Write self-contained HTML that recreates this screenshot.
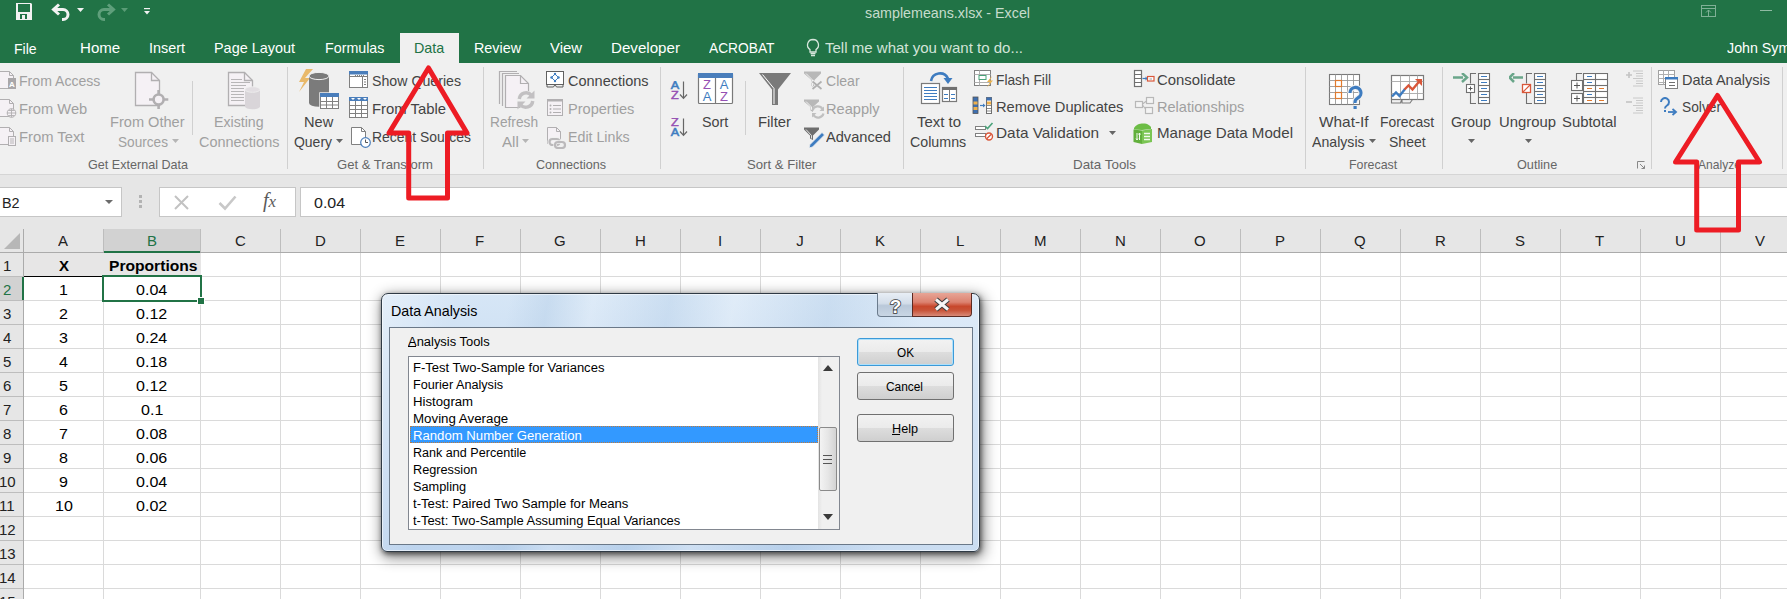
<!DOCTYPE html><html><head><meta charset="utf-8"><style>
html,body{margin:0;padding:0;width:1787px;height:599px;overflow:hidden;background:#fff}
.t{position:absolute;white-space:nowrap;line-height:1;font-family:"Liberation Sans",sans-serif;transform-origin:0 0}
.r{position:absolute}
</style></head><body>
<div class="r" style="left:0px;top:0px;width:1787px;height:63px;background:#217346"></div>
<div class="t" style="left:865px;top:5px;font-size:15px;color:#c6dccd;transform:scaleX(0.9516);">samplemeans.xlsx - Excel</div>
<svg class="r" style="left:14px;top:2px;" width="20" height="19" viewBox="0 0 20 19"><path d="M2 1h15l1 1v16H2z" fill="#f2f2f2"/><rect x="4" y="2" width="12" height="8" fill="#217346"/><rect x="6" y="12" width="7" height="5" fill="#217346"/><rect x="8" y="13" width="3" height="4" fill="#f2f2f2"/></svg>
<svg class="r" style="left:50px;top:2px;" width="24" height="19" viewBox="0 0 24 19"><path d="M5 7.5h8a5 5 0 0 1 0 10h-1" fill="none" stroke="#f2f2f2" stroke-width="3"/><path d="M9 2.5L3.5 7.5 9 12.5" fill="none" stroke="#f2f2f2" stroke-width="3"/></svg>
<svg class="r" style="left:77px;top:8px;" width="8" height="5" viewBox="0 0 8 5"><path d="M0 0h7L3.5 4z" fill="#f2f2f2"/></svg>
<svg class="r" style="left:94px;top:2px;" width="24" height="19" viewBox="0 0 24 19"><path d="M18 7.5h-8a5 5 0 0 0 0 10h1" fill="none" stroke="#5f9f7b" stroke-width="3"/><path d="M14 2.5l5.5 5-5.5 5" fill="none" stroke="#5f9f7b" stroke-width="3"/></svg>
<svg class="r" style="left:121px;top:8px;" width="8" height="5" viewBox="0 0 8 5"><path d="M0 0h7L3.5 4z" fill="#5a9c76"/></svg>
<svg class="r" style="left:144px;top:8px;" width="7" height="8" viewBox="0 0 7 8"><rect x="0" y="0" width="6" height="1.2" fill="#f2f2f2"/><path d="M0 3h6L3 6.5z" fill="#f2f2f2"/></svg>
<svg class="r" style="left:1700px;top:4px;" width="18" height="14" viewBox="0 0 18 14"><rect x="1.5" y="1.5" width="14" height="11" fill="none" stroke="#7fb096" stroke-width="1"/><path d="M1.5 4.5h14M8.5 12.5V6M6 8.5l2.5-2.5 2.5 2.5" fill="none" stroke="#7fb096" stroke-width="1"/></svg>
<div class="r" style="left:1760px;top:10px;width:12px;height:1px;background:#8fbba3"></div>
<div class="t" style="left:14.3px;top:41px;font-size:15px;color:#ffffff;transform:scaleX(0.9391);">File</div>
<div class="t" style="left:79.5px;top:40px;font-size:15px;color:#ffffff;transform:scaleX(1.0047);">Home</div>
<div class="t" style="left:148.8px;top:40px;font-size:15px;color:#ffffff;transform:scaleX(0.9569);">Insert</div>
<div class="t" style="left:214px;top:40px;font-size:15px;color:#ffffff;transform:scaleX(0.9616);">Page Layout</div>
<div class="t" style="left:324.5px;top:40px;font-size:15px;color:#ffffff;transform:scaleX(0.9502);">Formulas</div>
<div class="t" style="left:474px;top:40px;font-size:15px;color:#ffffff;transform:scaleX(0.9556);">Review</div>
<div class="t" style="left:550px;top:40px;font-size:15px;color:#ffffff;transform:scaleX(0.9925);">View</div>
<div class="t" style="left:611px;top:40px;font-size:15px;color:#ffffff;transform:scaleX(1.0092);">Developer</div>
<div class="t" style="left:709px;top:40px;font-size:15px;color:#ffffff;transform:scaleX(0.9174);">ACROBAT</div>
<div class="r" style="left:400px;top:33px;width:59px;height:31px;background:#f0f0f0"></div>
<div class="t" style="left:413.75px;top:40px;font-size:15px;color:#217346;transform:scaleX(0.9547);">Data</div>
<svg class="r" style="left:805px;top:38px;" width="16" height="19" viewBox="0 0 16 19"><path d="M8 1.5a5.5 5.5 0 0 0-3 10.1V14h6v-2.4A5.5 5.5 0 0 0 8 1.5z" fill="none" stroke="#d6e6dc" stroke-width="1.3"/><path d="M5.5 15.5h5M6 17.5h4" stroke="#d6e6dc" stroke-width="1.3"/></svg>
<div class="t" style="left:825px;top:40px;font-size:15px;color:#d3e4d9;transform:scaleX(1.0020);">Tell me what you want to do...</div>
<div class="t" style="left:1727px;top:40px;font-size:15px;color:#ffffff;transform:scaleX(0.9500);">John Symons</div>
<div class="r" style="left:0px;top:63px;width:1787px;height:111px;background:#f0f0f0"></div>
<div class="r" style="left:0px;top:174px;width:1787px;height:1px;background:#d5d5d5"></div>
<div class="r" style="left:0px;top:175px;width:1787px;height:54px;background:#e6e6e6"></div>
<div class="r" style="left:287px;top:67px;width:1px;height:102px;background:#d0d0d0"></div>
<div class="r" style="left:483px;top:67px;width:1px;height:102px;background:#d0d0d0"></div>
<div class="r" style="left:660px;top:67px;width:1px;height:102px;background:#d0d0d0"></div>
<div class="r" style="left:903px;top:67px;width:1px;height:102px;background:#d0d0d0"></div>
<div class="r" style="left:1305px;top:67px;width:1px;height:102px;background:#d0d0d0"></div>
<div class="r" style="left:1442px;top:67px;width:1px;height:102px;background:#d0d0d0"></div>
<div class="r" style="left:1651px;top:67px;width:1px;height:102px;background:#d0d0d0"></div>
<div class="r" style="left:1782px;top:67px;width:1px;height:102px;background:#d0d0d0"></div>
<div class="r" style="left:192px;top:81px;width:1px;height:54px;background:#d0d0d0"></div>
<div class="r" style="left:745px;top:81px;width:1px;height:54px;background:#d0d0d0"></div>
<div class="t" style="left:88px;top:158px;font-size:13px;color:#666666;transform:scaleX(0.9678);">Get External Data</div>
<div class="t" style="left:337px;top:158px;font-size:13px;color:#666666;transform:scaleX(1.0067);">Get & Transform</div>
<div class="t" style="left:536.4px;top:158px;font-size:13px;color:#666666;transform:scaleX(0.9686);">Connections</div>
<div class="t" style="left:747px;top:158px;font-size:13px;color:#666666;transform:scaleX(1.0113);">Sort & Filter</div>
<div class="t" style="left:1073px;top:158px;font-size:13px;color:#666666;transform:scaleX(1.0296);">Data Tools</div>
<div class="t" style="left:1349.4px;top:158px;font-size:13px;color:#666666;transform:scaleX(0.9531);">Forecast</div>
<div class="t" style="left:1516.8px;top:158px;font-size:13px;color:#666666;transform:scaleX(0.9759);">Outline</div>
<div class="t" style="left:1698px;top:158px;font-size:13px;color:#666666;transform:scaleX(0.9297);">Analyze</div>
<div class="t" style="left:19.2px;top:73px;font-size:15px;color:#a0a0a0;transform:scaleX(0.9390);">From Access</div>
<div class="t" style="left:19.2px;top:101px;font-size:15px;color:#a0a0a0;transform:scaleX(0.9780);">From Web</div>
<div class="t" style="left:19.2px;top:129px;font-size:15px;color:#a0a0a0;transform:scaleX(0.9849);">From Text</div>
<div class="t" style="left:110.4px;top:114px;font-size:15px;color:#a0a0a0;transform:scaleX(0.9729);">From Other</div>
<div class="t" style="left:117.6px;top:134px;font-size:15px;color:#a0a0a0;transform:scaleX(0.9086);">Sources</div>
<div class="t" style="left:214.4px;top:114px;font-size:15px;color:#a0a0a0;transform:scaleX(0.9443);">Existing</div>
<div class="t" style="left:199px;top:134px;font-size:15px;color:#a0a0a0;transform:scaleX(0.9642);">Connections</div>
<div class="t" style="left:304.4px;top:114px;font-size:15px;color:#444444;transform:scaleX(0.9731);">New</div>
<div class="t" style="left:294.4px;top:134px;font-size:15px;color:#444444;transform:scaleX(0.9303);">Query</div>
<div class="t" style="left:372px;top:73px;font-size:15px;color:#444444;transform:scaleX(0.9447);">Show Queries</div>
<div class="t" style="left:372px;top:101px;font-size:15px;color:#444444;transform:scaleX(0.9899);">From Table</div>
<div class="t" style="left:372px;top:129px;font-size:15px;color:#444444;transform:scaleX(0.9276);">Recent Sources</div>
<div class="t" style="left:490.4px;top:114px;font-size:15px;color:#a0a0a0;transform:scaleX(0.9139);">Refresh</div>
<div class="t" style="left:501.6px;top:134px;font-size:15px;color:#a0a0a0;transform:scaleX(1.0077);">All</div>
<div class="t" style="left:568px;top:73px;font-size:15px;color:#444444;transform:scaleX(0.9666);">Connections</div>
<div class="t" style="left:568px;top:101px;font-size:15px;color:#a0a0a0;transform:scaleX(0.9712);">Properties</div>
<div class="t" style="left:568px;top:129px;font-size:15px;color:#a0a0a0;transform:scaleX(0.9472);">Edit Links</div>
<div class="t" style="left:702.4px;top:114px;font-size:15px;color:#444444;transform:scaleX(0.9523);">Sort</div>
<div class="t" style="left:758px;top:114px;font-size:15px;color:#444444;transform:scaleX(0.9900);">Filter</div>
<div class="t" style="left:826px;top:73px;font-size:15px;color:#a0a0a0;transform:scaleX(0.9373);">Clear</div>
<div class="t" style="left:826px;top:101px;font-size:15px;color:#a0a0a0;transform:scaleX(0.9739);">Reapply</div>
<div class="t" style="left:826px;top:129px;font-size:15px;color:#444444;transform:scaleX(0.9742);">Advanced</div>
<div class="t" style="left:917px;top:114px;font-size:15px;color:#444444;transform:scaleX(0.9958);">Text to</div>
<div class="t" style="left:910.4px;top:134px;font-size:15px;color:#444444;transform:scaleX(0.9495);">Columns</div>
<div class="t" style="left:996.4px;top:72px;font-size:15px;color:#444444;transform:scaleX(0.9165);">Flash Fill</div>
<div class="t" style="left:996px;top:99px;font-size:15px;color:#444444;transform:scaleX(0.9796);">Remove Duplicates</div>
<div class="t" style="left:996px;top:125px;font-size:15px;color:#444444;transform:scaleX(1.0236);">Data Validation</div>
<div class="t" style="left:1157px;top:72px;font-size:15px;color:#444444;transform:scaleX(0.9922);">Consolidate</div>
<div class="t" style="left:1157px;top:99px;font-size:15px;color:#a0a0a0;transform:scaleX(0.9705);">Relationships</div>
<div class="t" style="left:1157px;top:125px;font-size:15px;color:#444444;transform:scaleX(1.0068);">Manage Data Model</div>
<div class="t" style="left:1319.4px;top:114px;font-size:15px;color:#444444;transform:scaleX(1.0261);">What-If</div>
<div class="t" style="left:1312.4px;top:134px;font-size:15px;color:#444444;transform:scaleX(0.9417);">Analysis</div>
<div class="t" style="left:1380.4px;top:114px;font-size:15px;color:#444444;transform:scaleX(0.9254);">Forecast</div>
<div class="t" style="left:1389px;top:134px;font-size:15px;color:#444444;transform:scaleX(0.9337);">Sheet</div>
<div class="t" style="left:1451px;top:114px;font-size:15px;color:#444444;transform:scaleX(0.9594);">Group</div>
<div class="t" style="left:1499px;top:114px;font-size:15px;color:#444444;transform:scaleX(0.9906);">Ungroup</div>
<div class="t" style="left:1562.4px;top:114px;font-size:15px;color:#444444;transform:scaleX(0.9920);">Subtotal</div>
<div class="t" style="left:1682.4px;top:72px;font-size:15px;color:#444444;transform:scaleX(0.9683);">Data Analysis</div>
<div class="t" style="left:1682px;top:99px;font-size:15px;color:#444444;transform:scaleX(0.9172);">Solver</div>
<svg class="r" style="left:172.0px;top:139px;" width="7" height="4" viewBox="0 0 7 4"><path d="M0 0h7L3.5 4z" fill="#b5b5b5"/></svg>
<svg class="r" style="left:336.0px;top:139px;" width="7" height="4" viewBox="0 0 7 4"><path d="M0 0h7L3.5 4z" fill="#666"/></svg>
<svg class="r" style="left:522.0px;top:139px;" width="7" height="4" viewBox="0 0 7 4"><path d="M0 0h7L3.5 4z" fill="#b5b5b5"/></svg>
<svg class="r" style="left:1109.0px;top:131px;" width="7" height="4" viewBox="0 0 7 4"><path d="M0 0h7L3.5 4z" fill="#666"/></svg>
<svg class="r" style="left:1368.5px;top:139px;" width="7" height="4" viewBox="0 0 7 4"><path d="M0 0h7L3.5 4z" fill="#666"/></svg>
<svg class="r" style="left:1468.0px;top:139px;" width="7" height="4" viewBox="0 0 7 4"><path d="M0 0h7L3.5 4z" fill="#666"/></svg>
<svg class="r" style="left:1524.5px;top:139px;" width="7" height="4" viewBox="0 0 7 4"><path d="M0 0h7L3.5 4z" fill="#666"/></svg>
<svg class="r" style="left:0px;top:71px;" width="17" height="19" viewBox="0 0 17 19"><path d="M-1 0.5H9.5L13.5 4.5V17.5H-1" fill="#f5f1f5" stroke="#b1afb1" stroke-width="1"/><path d="M9.5 0.5V4.5H13.5" fill="none" stroke="#b1afb1" stroke-width="1"/><rect x="8" y="7" width="8" height="11" fill="#a9a7a9"/><text x="12" y="16" text-anchor="middle" font-family="Liberation Sans" font-weight="bold" font-size="8" fill="#fff">A</text></svg>
<svg class="r" style="left:0px;top:99px;" width="17" height="19" viewBox="0 0 17 19"><path d="M-1 0.5H9.5L13.5 4.5V17.5H-1" fill="#f5f1f5" stroke="#b1afb1" stroke-width="1"/><path d="M9.5 0.5V4.5H13.5" fill="none" stroke="#b1afb1" stroke-width="1"/><circle cx="11.5" cy="14" r="4.3" fill="#f5f1f5" stroke="#b1afb1" stroke-width="1"/><path d="M7.2 14h8.6M11.5 9.7v8.6M8.5 11.5h6M8.5 16.5h6" stroke="#b1afb1" stroke-width="0.9"/></svg>
<svg class="r" style="left:0px;top:127px;" width="17" height="19" viewBox="0 0 17 19"><path d="M-1 0.5H9.5L13.5 4.5V17.5H-1" fill="#f5f1f5" stroke="#b1afb1" stroke-width="1"/><path d="M9.5 0.5V4.5H13.5" fill="none" stroke="#b1afb1" stroke-width="1"/><rect x="8.5" y="9.5" width="7" height="9" fill="#f5f1f5" stroke="#b1afb1" stroke-width="1"/><path d="M10 12h4M10 14h4M10 16h4" stroke="#b1afb1" stroke-width="0.9"/></svg>
<svg class="r" style="left:134px;top:71px;" width="36" height="40" viewBox="0 0 36 40"><path d="M1.5 1.5H17.5L25.5 9.5V34.5H1.5Z" fill="#f5f1f5" stroke="#b1afb1" stroke-width="1.3"/><path d="M17.5 1.5V9.5H25.5" fill="none" stroke="#b1afb1" stroke-width="1.3"/><circle cx="24.6" cy="28.5" r="5" fill="#f5f1f5" stroke="#b1afb1" stroke-width="2.6"/><path d="M24.6 19v5M24.6 33v5M15 28.5h5M29.3 28.5h5" stroke="#b1afb1" stroke-width="2.6"/></svg>
<svg class="r" style="left:227px;top:71px;" width="36" height="40" viewBox="0 0 36 40"><path d="M1.5 1.5H17.5L25.5 9.5V34.5H1.5Z" fill="#f5f1f5" stroke="#b1afb1" stroke-width="1.3"/><path d="M17.5 1.5V9.5H25.5" fill="none" stroke="#b1afb1" stroke-width="1.3"/><path d="M4 8.5H15" stroke="#b1afb1" stroke-width="0.9"/><path d="M4 11.5H23" stroke="#b1afb1" stroke-width="0.9"/><path d="M4 14.5H19" stroke="#b1afb1" stroke-width="0.9"/><path d="M4 17.5H17" stroke="#b1afb1" stroke-width="0.9"/><path d="M4 20.5H17" stroke="#b1afb1" stroke-width="0.9"/><path d="M4 23.5H17" stroke="#b1afb1" stroke-width="0.9"/><path d="M4 26.5H17" stroke="#b1afb1" stroke-width="0.9"/><path d="M4 29.5H17" stroke="#b1afb1" stroke-width="0.9"/><path d="M18 18.5v17a7.5 2.8 0 0 0 15 0v-17z" fill="#d9d5d9"/><ellipse cx="25.5" cy="18.5" rx="7.5" ry="2.8" fill="#e2dee2" stroke="#f0f0f0" stroke-width="0.8"/></svg>
<svg class="r" style="left:297px;top:68px;" width="44" height="42" viewBox="0 0 44 42"><path d="M16 1H9L2 14h5L2 24 13 10H8z" fill="#e9b96a"/><path d="M12 8v27a10 3.8 0 0 0 20 0V8z" fill="#7b7b7b"/><ellipse cx="22" cy="8" rx="10" ry="3.6" fill="#7b7b7b" stroke="#f0f0f0" stroke-width="1"/><rect x="23" y="25" width="19" height="16" fill="#fff" stroke="#f0f0f0" stroke-width="1.5"/><rect x="23.5" y="25.5" width="18" height="15" fill="#fff" stroke="#808080" stroke-width="1"/><rect x="23" y="25" width="19" height="4" fill="#4a7ebb"/><path d="M29.5 29v12M35.5 29v12M23.5 33.5h18M23.5 37h18" stroke="#808080" stroke-width="1"/></svg>
<svg class="r" style="left:349px;top:71px;" width="20" height="18" viewBox="0 0 20 18"><rect x="0.5" y="0.5" width="18" height="16" fill="#fff" stroke="#808080"/><rect x="0" y="0" width="19" height="3.5" fill="#4a7ebb"/><path d="M0.5 5.5h18M13.5 5.5v11" stroke="#808080"/><path d="M6 4.5h1M8 4.5h1M10 4.5h1M12 4.5h1M14 4.5h1M15 8.5h2M15 11h2M15 13.5h2" stroke="#808080"/></svg>
<svg class="r" style="left:349px;top:97px;" width="20" height="22" viewBox="0 0 20 22"><rect x="0.5" y="0.5" width="18" height="20" fill="#fff" stroke="#808080"/><rect x="0" y="0" width="19" height="4" fill="#4a7ebb"/><path d="M2 1l2 2 2-2zM8 1l2 2 2-2zM14 1l2 2 2-2z" fill="#fff"/><path d="M6.5 4v16M12.5 4v16M0.5 8.5h18M0.5 12.5h18M0.5 16.5h18" stroke="#808080"/></svg>
<svg class="r" style="left:350px;top:126px;" width="22" height="22" viewBox="0 0 22 22"><path d="M1.5 1.5H11.5L15.5 5.5V18.5H1.5Z" fill="#fff" stroke="#808080"/><path d="M11.5 1.5V5.5H15.5" fill="none" stroke="#808080"/><circle cx="15.5" cy="16.5" r="4.8" fill="#fff" stroke="#4a7ebb" stroke-width="1.2"/><path d="M15.5 13.5v3h2.5" fill="none" stroke="#555" stroke-width="1"/></svg>
<svg class="r" style="left:498px;top:70px;" width="40" height="40" viewBox="0 0 40 40"><path d="M1.5 34V1.5H19" fill="none" stroke="#b1afb1" stroke-width="1.2"/><path d="M4.5 36V3.5H21" fill="none" stroke="#b1afb1" stroke-width="1.2"/><path d="M7.5 37.5V5.5H22.5L30.5 13.5V37.5Z" fill="#f5f1f5" stroke="#b1afb1" stroke-width="1.2"/><path d="M22.5 5.5V13.5H30.5" fill="none" stroke="#b1afb1" stroke-width="1.2"/><circle cx="28" cy="30" r="9.5" fill="#f0f0f0"/><path d="M21.3 29a6.8 6.8 0 0 1 12-3.8" fill="none" stroke="#c2c0c2" stroke-width="3.4"/><path d="M36.5 20.5v8h-8z" fill="#c2c0c2"/><path d="M34.7 31a6.8 6.8 0 0 1-12 3.8" fill="none" stroke="#c2c0c2" stroke-width="3.4"/><path d="M19.5 39.5v-8h8z" fill="#c2c0c2"/></svg>
<svg class="r" style="left:546px;top:71px;" width="19" height="17" viewBox="0 0 19 17"><rect x="0.5" y="0.5" width="17" height="13" fill="#fff" stroke="#606060"/><path d="M1 13.5v2.5h6.5l1.5-2.5M9 13.5l1.5 2.5h6.5v-2.5" fill="none" stroke="#606060"/><path d="M9 3l3.5 3.5L9 10 5.5 6.5z" fill="none" stroke="#3e7cc0" stroke-width="1"/><circle cx="9" cy="3" r="1.2" fill="#3e7cc0"/><circle cx="12.5" cy="6.5" r="1.2" fill="#3e7cc0"/><circle cx="9" cy="10" r="1.2" fill="#3e7cc0"/><circle cx="5.5" cy="6.5" r="1.2" fill="#3e7cc0"/></svg>
<svg class="r" style="left:546px;top:98px;" width="18" height="19" viewBox="0 0 18 19"><rect x="1.5" y="1.5" width="15" height="16" fill="#f5f1f5" stroke="#b1afb1"/><rect x="1" y="1" width="16" height="2.5" fill="#b1afb1"/><path d="M7 7.5h8M7 11h8M7 14.5h8" stroke="#b1afb1" stroke-width="1.2"/><circle cx="4.5" cy="7.5" r="1" fill="#b1afb1"/><circle cx="4.5" cy="11" r="1" fill="#b1afb1"/><circle cx="4.5" cy="14.5" r="1" fill="#b1afb1"/></svg>
<svg class="r" style="left:546px;top:126px;" width="22" height="23" viewBox="0 0 22 23"><path d="M1.5 1.5H10.5L14.5 5.5V17.5H1.5Z" fill="#f5f1f5" stroke="#b1afb1"/><path d="M10.5 1.5V5.5H14.5" fill="none" stroke="#b1afb1"/><rect x="3.5" y="13" width="10" height="6" rx="3" fill="none" stroke="#f0f0f0" stroke-width="4"/><rect x="3.5" y="13" width="10" height="6" rx="3" fill="none" stroke="#bbb9bb" stroke-width="2.2"/><rect x="9" y="16" width="10" height="6" rx="3" fill="none" stroke="#f0f0f0" stroke-width="3.5"/><rect x="9" y="16" width="10" height="6" rx="3" fill="none" stroke="#bbb9bb" stroke-width="2.2"/></svg>
<svg class="r" style="left:669px;top:81px;" width="20" height="19" viewBox="0 0 20 19"><text x="6" y="8.2" text-anchor="middle" font-family="Liberation Sans" font-size="11" fill="#3e7cc0" stroke="#3e7cc0" stroke-width="0.5" transform="translate(6 0) scale(1.15 1) translate(-6 0)">A</text><text x="6" y="17.6" text-anchor="middle" font-family="Liberation Sans" font-size="11" fill="#9550b3" stroke="#9550b3" stroke-width="0.5" transform="translate(6 0) scale(1.15 1) translate(-6 0)">Z</text><path d="M14.5 0.5V17M11 13.5l3.5 3.8 3.5-3.8" fill="none" stroke="#666" stroke-width="1.2"/></svg>
<svg class="r" style="left:669px;top:118px;" width="20" height="19" viewBox="0 0 20 19"><text x="6" y="8.2" text-anchor="middle" font-family="Liberation Sans" font-size="11" fill="#9550b3" stroke="#9550b3" stroke-width="0.5" transform="translate(6 0) scale(1.15 1) translate(-6 0)">Z</text><text x="6" y="17.6" text-anchor="middle" font-family="Liberation Sans" font-size="11" fill="#3e7cc0" stroke="#3e7cc0" stroke-width="0.5" transform="translate(6 0) scale(1.15 1) translate(-6 0)">A</text><path d="M14.5 0.5V17M11 13.5l3.5 3.8 3.5-3.8" fill="none" stroke="#666" stroke-width="1.2"/></svg>
<svg class="r" style="left:697px;top:72px;" width="37" height="33" viewBox="0 0 37 33"><rect x="1.5" y="1.5" width="34" height="30" rx="1" fill="#fff" stroke="#7a7a7a" stroke-width="1.2"/><rect x="1" y="1" width="35" height="5" fill="#4a7ebb"/><path d="M18.5 6v26" stroke="#7a7a7a" stroke-width="1.2"/><text x="10" y="17" text-anchor="middle" font-family="Liberation Sans" font-size="13" fill="#9550b3">Z</text><text x="10" y="29" text-anchor="middle" font-family="Liberation Sans" font-size="13" fill="#3e7cc0">A</text><text x="27" y="17" text-anchor="middle" font-family="Liberation Sans" font-size="13" fill="#3e7cc0">A</text><text x="27" y="29" text-anchor="middle" font-family="Liberation Sans" font-size="13" fill="#9550b3">Z</text></svg>
<svg class="r" style="left:758px;top:72px;" width="35" height="34" viewBox="0 0 35 34"><path d="M1 1h32L20 17.5V33h-6V17.5z" fill="#7a7a7a"/><path d="M4.5 2.5L16 16.5V32" fill="none" stroke="#fff" stroke-width="1"/></svg>
<svg class="r" style="left:803px;top:70px;" width="22" height="22" viewBox="0 0 22 22"><path d="M1 1.5h17v2L11.5 10v7.5l-3-1.5V10L1 3.5z" fill="#b8b8b8"/><path d="M3 3.5l6.5 6.5v6" fill="none" stroke="#fff" stroke-width="0.8"/><path d="M9 11l10 8.5M19 11L9 19.5" stroke="#f0f0f0" stroke-width="3.2"/><path d="M9.5 11.5l9 7.5M18.5 11.5l-9 7.5" stroke="#b0b0b0" stroke-width="1.7"/></svg>
<svg class="r" style="left:803px;top:98px;" width="22" height="22" viewBox="0 0 22 22"><path d="M1 1.5h15v2L10 9v5l-2.5-1.5V9L1 3.5z" fill="#b8b8b8"/><path d="M3 3.5l5.5 5.5v3" fill="none" stroke="#fff" stroke-width="0.8"/><path d="M9.5 12.5a5.5 5.5 0 0 1 10-1.5" fill="none" stroke="#c0c0c0" stroke-width="2.2"/><path d="M21 8.5v4.5h-4.5z" fill="#c0c0c0"/><path d="M20.5 15.5a5.5 5.5 0 0 1-10 1.5" fill="none" stroke="#c0c0c0" stroke-width="2.2"/><path d="M9 19.5V15h4.5z" fill="#c0c0c0"/></svg>
<svg class="r" style="left:803px;top:126px;" width="24" height="22" viewBox="0 0 24 22"><path d="M1 1.5h15v2L10 9.5V14l-3-1.5V9.5L1 3.5z" fill="#6e6e6e"/><path d="M3 3.5l5.5 6v3" fill="none" stroke="#fff" stroke-width="0.8"/><path d="M19 6.5l2.5 2.5L9.5 21l-3.5 1 1-3.5z" fill="#3e7cc0" stroke="#f0f0f0" stroke-width="0.8"/></svg>
<svg class="r" style="left:919px;top:71px;" width="40" height="35" viewBox="0 0 40 35"><rect x="2.5" y="12.5" width="18" height="20" fill="#fff" stroke="#7a7a7a" stroke-width="1.2"/><path d="M5 16.5h13M5 19.5h13M5 22.5h13M5 25.5h13M5 28.5h13" stroke="#3e7cc0" stroke-width="1"/><rect x="23.5" y="16.5" width="14" height="14" fill="#fff" stroke="#7a7a7a" stroke-width="1.2"/><rect x="23" y="16" width="15" height="3" fill="#707070"/><path d="M30.5 19v11.5" stroke="#7a7a7a"/><path d="M25 23.5h4M32 23.5h4M25 27.5h4M32 27.5h4" stroke="#3e7cc0"/><path d="M12 10a9 9 0 0 1 17-2.5" fill="none" stroke="#3e7cc0" stroke-width="2.6"/><path d="M24.5 7h9l-4.5 6z" fill="#3e7cc0"/></svg>
<svg class="r" style="left:973px;top:70px;" width="21" height="18" viewBox="0 0 21 18"><rect x="1.5" y="0.5" width="16" height="15" fill="#fff" stroke="#808080"/><path d="M1.5 4.5h16M1.5 12.5h16M6.5 0.5v15" stroke="#b0b0b0"/><rect x="6" y="5.5" width="7" height="4" fill="#fff" stroke="#4aa37a" stroke-width="1"/><path d="M19 6l-5 6h3l-3 5.5 6-7h-3z" fill="#e9b24f"/></svg>
<svg class="r" style="left:972px;top:96px;" width="22" height="19" viewBox="0 0 22 19"><rect x="1" y="1" width="5" height="16.5" fill="#3e6fb0" stroke="#555" stroke-width="0.8"/><rect x="1.5" y="5.5" width="4" height="3" fill="#f0b04a"/><rect x="1.5" y="11" width="4" height="3" fill="#f0b04a"/><path d="M8 9.5h4" stroke="#3e7cc0" stroke-width="1.2"/><path d="M11 7.5l2.5 2-2.5 2z" fill="#3e7cc0"/><rect x="14.5" y="1.5" width="5" height="16" fill="#fff" stroke="#707070"/><rect x="14.5" y="1.5" width="5" height="3" fill="#3e6fb0"/><rect x="15" y="5.5" width="4" height="3" fill="#f0b04a"/><path d="M14.5 9.5h5M14.5 12.5h5M14.5 15h5" stroke="#707070" stroke-width="0.8"/></svg>
<svg class="r" style="left:974px;top:122px;" width="20" height="19" viewBox="0 0 20 19"><rect x="1.5" y="4.5" width="10" height="3" fill="#fff" stroke="#808080"/><rect x="1.5" y="11.5" width="10" height="3" fill="#fff" stroke="#808080"/><path d="M11 4l2.5 2.5L18.5 1" fill="none" stroke="#4aa37a" stroke-width="1.6"/><circle cx="15" cy="14.5" r="3.5" fill="#fff" stroke="#d9573a" stroke-width="1.4"/><path d="M12.7 16.8l4.6-4.6" stroke="#d9573a" stroke-width="1.4"/></svg>
<svg class="r" style="left:1133px;top:69px;" width="23" height="20" viewBox="0 0 23 20"><rect x="1.5" y="1.5" width="7" height="16" fill="#fff" stroke="#707070" stroke-width="1.2"/><path d="M1.5 5.5h7M1.5 9.5h7M1.5 13.5h7" stroke="#707070" stroke-width="1.2"/><path d="M9.5 9.5h3.5" stroke="#3e7cc0" stroke-width="1.2"/><path d="M12.5 7.5l2.3 2-2.3 2z" fill="#3e7cc0"/><rect x="14.5" y="7.5" width="6.5" height="4.5" fill="#fff" stroke="#d9573a" stroke-width="1.2"/><path d="M16.5 10h2.5" stroke="#808080" stroke-width="0.8"/></svg>
<svg class="r" style="left:1134px;top:96px;" width="21" height="19" viewBox="0 0 21 19"><rect x="1.5" y="5.5" width="7" height="6" fill="#f4f4f4" stroke="#b8b8b8" stroke-width="1.2"/><rect x="12.5" y="1.5" width="7" height="6" fill="#f4f4f4" stroke="#b8b8b8" stroke-width="1.2"/><rect x="11.5" y="11.5" width="7" height="6" fill="#f4f4f4" stroke="#b8b8b8" stroke-width="1.2"/><path d="M8.5 8l4-3M8.5 9l3 4" stroke="#b8b8b8" stroke-width="1.1"/></svg>
<svg class="r" style="left:1132px;top:122px;" width="23" height="23" viewBox="0 0 23 23"><path d="M2 6C4 2 9 1 13 1.5c3 .5 5 2 6 3.5v2L10 8 2 7.5z" fill="#6cbd45"/><path d="M1.5 7.5L10 8.5v13.5L1.5 20z" fill="#62b03c"/><path d="M10 8.5l10-1.5v13L10 22z" fill="#7ac553"/><path d="M12 11.5h6M12 14.5h6M12 17.5h6" stroke="#f2f9ee" stroke-width="1.3"/><path d="M5 11v7M4 16.5l1 1.5 1-1.5M7.5 18v-7M6.5 12.5l1-1.5 1 1.5" fill="none" stroke="#f2f9ee" stroke-width="1"/></svg>
<svg class="r" style="left:1328px;top:73px;" width="36" height="37" viewBox="0 0 36 37"><rect x="1.5" y="1.5" width="30" height="30" fill="#fff" stroke="#7a7a7a" stroke-width="1.1"/><path d="M7.5 1.5v30" stroke="#9a9a9a" stroke-width="0.9"/><path d="M1.5 7.5h30" stroke="#9a9a9a" stroke-width="0.9"/><path d="M13.5 1.5v30" stroke="#9a9a9a" stroke-width="0.9"/><path d="M1.5 13.5h30" stroke="#9a9a9a" stroke-width="0.9"/><path d="M19.5 1.5v30" stroke="#9a9a9a" stroke-width="0.9"/><path d="M1.5 19.5h30" stroke="#9a9a9a" stroke-width="0.9"/><path d="M25.5 1.5v30" stroke="#9a9a9a" stroke-width="0.9"/><path d="M1.5 25.5h30" stroke="#9a9a9a" stroke-width="0.9"/><rect x="7.5" y="7.5" width="6" height="6" fill="#fff" stroke="#e07a2e" stroke-width="1.2"/><rect x="7.5" y="19.5" width="6" height="6" fill="#fff" stroke="#e07a2e" stroke-width="1.2"/><path d="M22 20a5.5 5.5 0 1 1 8 4.8c-2 1.2-3 2.2-3 4.2v1" fill="none" stroke="#f0f0f0" stroke-width="5.5"/><path d="M22 20a5.5 5.5 0 1 1 8 4.8c-2 1.2-3 2.2-3 4.2v1" fill="none" stroke="#3e7cc0" stroke-width="3.2"/><rect x="25.5" y="33" width="3.2" height="3" fill="#3e7cc0"/></svg>
<svg class="r" style="left:1390px;top:74px;" width="36" height="31" viewBox="0 0 36 31"><rect x="1.5" y="1.5" width="32" height="24" fill="#fff" stroke="#7a7a7a" stroke-width="1.2"/><path d="M10.5 1.5v24M19.5 1.5v24M27.5 1.5v24M1.5 7.5h32M1.5 19.5h32" stroke="#a8a8a8" stroke-width="0.9"/><path d="M1.5 25.5v3.5h9l1-3M12 25.5v3.5h8l2.5-3.5" fill="none" stroke="#7a7a7a" stroke-width="1.1"/><path d="M2 22.5l4-4 3.5 3.5 5.5-7" fill="none" stroke="#3e7cc0" stroke-width="2.4"/><path d="M14.5 15.5l4-4 4 4 7.5-9" fill="none" stroke="#d9573a" stroke-width="2.4"/><path d="M25 5h7v7z" fill="#d9573a"/></svg>
<svg class="r" style="left:1453px;top:73px;" width="40" height="32" viewBox="0 0 40 32"><path d="M0 4.5h10" stroke="#6aa68a" stroke-width="2.5"/><path d="M9 0l5 4.5-5 4.5" fill="none" stroke="#6aa68a" stroke-width="2.5"/><path d="M23 0.5h-5.5v10M17.5 20v10.5H23" fill="none" stroke="#707070" stroke-width="1.1"/><rect x="13.5" y="11.5" width="8" height="8" fill="#fff" stroke="#707070" stroke-width="1.1"/><path d="M15.5 15.5h4M17.5 13.5v4" stroke="#555" stroke-width="1"/><rect x="25.5" y="0.5" width="11" height="30" fill="#fff" stroke="#707070" stroke-width="1.1"/><path d="M25.5 6.5h11" stroke="#707070" stroke-width="1.1"/><path d="M25.5 12.5h11" stroke="#707070" stroke-width="1.1"/><path d="M25.5 18.5h11" stroke="#707070" stroke-width="1.1"/><path d="M25.5 24.5h11" stroke="#707070" stroke-width="1.1"/><path d="M28 3.5h6" stroke="#3e7cc0" stroke-width="1"/><path d="M28 9.5h6" stroke="#3e7cc0" stroke-width="1"/><path d="M28 15.5h6" stroke="#3e7cc0" stroke-width="1"/><path d="M28 21.5h6" stroke="#3e7cc0" stroke-width="1"/><path d="M28 27.5h6" stroke="#3e7cc0" stroke-width="1"/></svg>
<svg class="r" style="left:1509px;top:73px;" width="40" height="32" viewBox="0 0 40 32"><path d="M4 4.5h10" stroke="#6aa68a" stroke-width="2.5"/><path d="M5 0L0.5 4.5 5 9" fill="none" stroke="#6aa68a" stroke-width="2.5"/><path d="M23 0.5h-5.5v10M17.5 20v10.5H23" fill="none" stroke="#707070" stroke-width="1.1"/><rect x="13.5" y="11.5" width="8" height="8" fill="#fff" stroke="#d9573a" stroke-width="1.3"/><path d="M14 19l7-7" stroke="#d9573a" stroke-width="1.2"/><rect x="25.5" y="0.5" width="11" height="30" fill="#fff" stroke="#707070" stroke-width="1.1"/><path d="M25.5 6.5h11" stroke="#707070" stroke-width="1.1"/><path d="M25.5 12.5h11" stroke="#707070" stroke-width="1.1"/><path d="M25.5 18.5h11" stroke="#707070" stroke-width="1.1"/><path d="M25.5 24.5h11" stroke="#707070" stroke-width="1.1"/><path d="M28 3.5h6" stroke="#3e7cc0" stroke-width="1"/><path d="M28 9.5h6" stroke="#3e7cc0" stroke-width="1"/><path d="M28 15.5h6" stroke="#3e7cc0" stroke-width="1"/><path d="M28 21.5h6" stroke="#3e7cc0" stroke-width="1"/><path d="M28 27.5h6" stroke="#3e7cc0" stroke-width="1"/></svg>
<svg class="r" style="left:1571px;top:73px;" width="38" height="32" viewBox="0 0 38 32"><path d="M5.5 7V0.5H11" fill="none" stroke="#707070" stroke-width="1.1"/><rect x="0.5" y="7.5" width="11" height="10" fill="#fff" stroke="#707070" stroke-width="1.1"/><rect x="0.5" y="20.5" width="11" height="10" fill="#fff" stroke="#707070" stroke-width="1.1"/><path d="M3 12.5h6M6 9.5v6M3 25.5h6M6 22.5v6" stroke="#555"/><rect x="12.5" y="0.5" width="24" height="30" fill="#fff" stroke="#707070" stroke-width="1.1"/><path d="M24.5 0.5v30" stroke="#707070" stroke-width="1.1"/><path d="M12.5 6.5h24" stroke="#707070" stroke-width="1.1"/><path d="M12.5 12.5h24" stroke="#707070" stroke-width="1.1"/><path d="M12.5 18.5h24" stroke="#707070" stroke-width="1.1"/><path d="M12.5 24.5h24" stroke="#707070" stroke-width="1.1"/><path d="M16 3.5h5" stroke="#3e7cc0" stroke-width="1"/><path d="M16 9.5h5" stroke="#3e7cc0" stroke-width="1"/><path d="M16 15.5h5" stroke="#e07a2e" stroke-width="1"/><path d="M28 15.5h5" stroke="#e07a2e" stroke-width="1"/><path d="M16 21.5h5" stroke="#3e7cc0" stroke-width="1"/><path d="M16 27.5h5" stroke="#e07a2e" stroke-width="1"/><path d="M28 27.5h5" stroke="#e07a2e" stroke-width="1"/></svg>
<svg class="r" style="left:1625px;top:70px;" width="20" height="17" viewBox="0 0 20 17"><path d="M1 5h6M4 2v6" stroke="#c4c4c4" stroke-width="1.6"/><path d="M8 1h10M11 3.5h7M11 6h7M8 8.5h10M11 11h7M11 13.5h7M8 16h10" stroke="#c4c4c4" stroke-width="0.9"/></svg>
<svg class="r" style="left:1625px;top:97px;" width="20" height="17" viewBox="0 0 20 17"><path d="M1 5h6" stroke="#c4c4c4" stroke-width="1.6"/><path d="M8 1h10M11 3.5h7M11 6h7M8 8.5h10M11 11h7M11 13.5h7M8 16h10" stroke="#c4c4c4" stroke-width="0.9"/></svg>
<svg class="r" style="left:1637px;top:161px;" width="9" height="9" viewBox="0 0 9 9"><path d="M0.5 0.5h7M0.5 0.5v7" stroke="#888" stroke-width="1"/><path d="M3 3l4.5 4.5M4.5 7.5h3v-3" fill="none" stroke="#888" stroke-width="1"/></svg>
<svg class="r" style="left:1658px;top:70px;" width="22" height="20" viewBox="0 0 22 20"><rect x="0.5" y="0.5" width="16" height="14" fill="#fff" stroke="#a0a0a0"/><path d="M0.5 4.5h16M0.5 8.5h16M0.5 12.5h16M5.5 0.5v14M10.5 0.5v14" stroke="#b0b0b0"/><rect x="7.5" y="7.5" width="12" height="11" fill="#fff" stroke="#808080"/><rect x="7" y="7" width="13" height="2.5" fill="#3e7cc0"/><path d="M11 12.5h6M11 15.5h6" stroke="#707070" stroke-width="1.1"/></svg>
<svg class="r" style="left:1659px;top:97px;" width="20" height="19" viewBox="0 0 20 19"><path d="M2 5a4 4 0 1 1 6 3.5c-1.3.8-2 1.5-2 3" fill="none" stroke="#3e7cc0" stroke-width="2"/><rect x="5" y="13" width="2" height="2" fill="#3e7cc0"/><path d="M9 15h7" stroke="#3e7cc0" stroke-width="1.8"/><path d="M13.5 12l3.5 3-3.5 3" fill="none" stroke="#3e7cc0" stroke-width="1.8"/></svg>
<div class="r" style="left:0px;top:187px;width:122px;height:30px;background:#fff;border:1px solid #c6c6c6;border-left:none;box-sizing:border-box"></div>
<div class="t" style="left:2.4px;top:195px;font-size:15px;color:#222;transform:scaleX(0.9592);">B2</div>
<svg class="r" style="left:105px;top:200px;" width="9" height="5" viewBox="0 0 9 5"><path d="M0 0h8L4 4z" fill="#6b6b6b"/></svg>
<div class="r" style="left:139px;top:195px;width:3px;height:3px;background:#b3b3b3"></div>
<div class="r" style="left:139px;top:200px;width:3px;height:3px;background:#b3b3b3"></div>
<div class="r" style="left:139px;top:205px;width:3px;height:3px;background:#b3b3b3"></div>
<div class="r" style="left:159px;top:187px;width:137px;height:30px;background:#fff;border:1px solid #c6c6c6;box-sizing:border-box"></div>
<svg class="r" style="left:173px;top:194px;" width="18" height="17" viewBox="0 0 18 17"><path d="M2 2l13 13M15 2L2 15" stroke="#c2c2c2" stroke-width="2"/></svg>
<svg class="r" style="left:218px;top:194px;" width="19" height="17" viewBox="0 0 19 17"><path d="M1.5 9l5.5 5.5L17.5 2.5" fill="none" stroke="#c8c8c8" stroke-width="2.6"/></svg>
<div class="t" style="left:263px;top:190px;font:italic 20px/1 'Liberation Serif';color:#5a5a5a;">f<span style="font-size:17px">x</span></div>
<div class="r" style="left:300px;top:187px;width:1487px;height:30px;background:#fff;border:1px solid #c6c6c6;border-right:none;box-sizing:border-box"></div>
<div class="t" style="left:313.5px;top:195px;font-size:15px;color:#222;transform:scaleX(1.0687);">0.04</div>
<div class="r" style="left:0px;top:229px;width:1787px;height:24px;background:#e6e6e6"></div>
<div class="r" style="left:0px;top:253px;width:23px;height:346px;background:#e6e6e6"></div>
<div class="r" style="left:24px;top:253px;width:1763px;height:346px;background:#fff"></div>
<div class="r" style="left:23px;top:229px;width:1px;height:370px;background:#ababab"></div>
<div class="r" style="left:103px;top:229px;width:1px;height:23px;background:#bdbdbd"></div>
<div class="r" style="left:103px;top:253px;width:1px;height:346px;background:#dadada"></div>
<div class="r" style="left:200px;top:229px;width:1px;height:23px;background:#bdbdbd"></div>
<div class="r" style="left:200px;top:253px;width:1px;height:346px;background:#dadada"></div>
<div class="r" style="left:280px;top:229px;width:1px;height:23px;background:#bdbdbd"></div>
<div class="r" style="left:280px;top:253px;width:1px;height:346px;background:#dadada"></div>
<div class="r" style="left:360px;top:229px;width:1px;height:23px;background:#bdbdbd"></div>
<div class="r" style="left:360px;top:253px;width:1px;height:346px;background:#dadada"></div>
<div class="r" style="left:440px;top:229px;width:1px;height:23px;background:#bdbdbd"></div>
<div class="r" style="left:440px;top:253px;width:1px;height:346px;background:#dadada"></div>
<div class="r" style="left:520px;top:229px;width:1px;height:23px;background:#bdbdbd"></div>
<div class="r" style="left:520px;top:253px;width:1px;height:346px;background:#dadada"></div>
<div class="r" style="left:600px;top:229px;width:1px;height:23px;background:#bdbdbd"></div>
<div class="r" style="left:600px;top:253px;width:1px;height:346px;background:#dadada"></div>
<div class="r" style="left:680px;top:229px;width:1px;height:23px;background:#bdbdbd"></div>
<div class="r" style="left:680px;top:253px;width:1px;height:346px;background:#dadada"></div>
<div class="r" style="left:760px;top:229px;width:1px;height:23px;background:#bdbdbd"></div>
<div class="r" style="left:760px;top:253px;width:1px;height:346px;background:#dadada"></div>
<div class="r" style="left:840px;top:229px;width:1px;height:23px;background:#bdbdbd"></div>
<div class="r" style="left:840px;top:253px;width:1px;height:346px;background:#dadada"></div>
<div class="r" style="left:920px;top:229px;width:1px;height:23px;background:#bdbdbd"></div>
<div class="r" style="left:920px;top:253px;width:1px;height:346px;background:#dadada"></div>
<div class="r" style="left:1000px;top:229px;width:1px;height:23px;background:#bdbdbd"></div>
<div class="r" style="left:1000px;top:253px;width:1px;height:346px;background:#dadada"></div>
<div class="r" style="left:1080px;top:229px;width:1px;height:23px;background:#bdbdbd"></div>
<div class="r" style="left:1080px;top:253px;width:1px;height:346px;background:#dadada"></div>
<div class="r" style="left:1160px;top:229px;width:1px;height:23px;background:#bdbdbd"></div>
<div class="r" style="left:1160px;top:253px;width:1px;height:346px;background:#dadada"></div>
<div class="r" style="left:1240px;top:229px;width:1px;height:23px;background:#bdbdbd"></div>
<div class="r" style="left:1240px;top:253px;width:1px;height:346px;background:#dadada"></div>
<div class="r" style="left:1320px;top:229px;width:1px;height:23px;background:#bdbdbd"></div>
<div class="r" style="left:1320px;top:253px;width:1px;height:346px;background:#dadada"></div>
<div class="r" style="left:1400px;top:229px;width:1px;height:23px;background:#bdbdbd"></div>
<div class="r" style="left:1400px;top:253px;width:1px;height:346px;background:#dadada"></div>
<div class="r" style="left:1480px;top:229px;width:1px;height:23px;background:#bdbdbd"></div>
<div class="r" style="left:1480px;top:253px;width:1px;height:346px;background:#dadada"></div>
<div class="r" style="left:1560px;top:229px;width:1px;height:23px;background:#bdbdbd"></div>
<div class="r" style="left:1560px;top:253px;width:1px;height:346px;background:#dadada"></div>
<div class="r" style="left:1640px;top:229px;width:1px;height:23px;background:#bdbdbd"></div>
<div class="r" style="left:1640px;top:253px;width:1px;height:346px;background:#dadada"></div>
<div class="r" style="left:1720px;top:229px;width:1px;height:23px;background:#bdbdbd"></div>
<div class="r" style="left:1720px;top:253px;width:1px;height:346px;background:#dadada"></div>
<div class="r" style="left:0px;top:252px;width:1787px;height:1px;background:#ababab"></div>
<div class="r" style="left:0px;top:276px;width:23px;height:1px;background:#bdbdbd"></div>
<div class="r" style="left:24px;top:276px;width:1763px;height:1px;background:#dadada"></div>
<div class="r" style="left:0px;top:300px;width:23px;height:1px;background:#bdbdbd"></div>
<div class="r" style="left:24px;top:300px;width:1763px;height:1px;background:#dadada"></div>
<div class="r" style="left:0px;top:324px;width:23px;height:1px;background:#bdbdbd"></div>
<div class="r" style="left:24px;top:324px;width:1763px;height:1px;background:#dadada"></div>
<div class="r" style="left:0px;top:348px;width:23px;height:1px;background:#bdbdbd"></div>
<div class="r" style="left:24px;top:348px;width:1763px;height:1px;background:#dadada"></div>
<div class="r" style="left:0px;top:372px;width:23px;height:1px;background:#bdbdbd"></div>
<div class="r" style="left:24px;top:372px;width:1763px;height:1px;background:#dadada"></div>
<div class="r" style="left:0px;top:396px;width:23px;height:1px;background:#bdbdbd"></div>
<div class="r" style="left:24px;top:396px;width:1763px;height:1px;background:#dadada"></div>
<div class="r" style="left:0px;top:420px;width:23px;height:1px;background:#bdbdbd"></div>
<div class="r" style="left:24px;top:420px;width:1763px;height:1px;background:#dadada"></div>
<div class="r" style="left:0px;top:444px;width:23px;height:1px;background:#bdbdbd"></div>
<div class="r" style="left:24px;top:444px;width:1763px;height:1px;background:#dadada"></div>
<div class="r" style="left:0px;top:468px;width:23px;height:1px;background:#bdbdbd"></div>
<div class="r" style="left:24px;top:468px;width:1763px;height:1px;background:#dadada"></div>
<div class="r" style="left:0px;top:492px;width:23px;height:1px;background:#bdbdbd"></div>
<div class="r" style="left:24px;top:492px;width:1763px;height:1px;background:#dadada"></div>
<div class="r" style="left:0px;top:516px;width:23px;height:1px;background:#bdbdbd"></div>
<div class="r" style="left:24px;top:516px;width:1763px;height:1px;background:#dadada"></div>
<div class="r" style="left:0px;top:540px;width:23px;height:1px;background:#bdbdbd"></div>
<div class="r" style="left:24px;top:540px;width:1763px;height:1px;background:#dadada"></div>
<div class="r" style="left:0px;top:564px;width:23px;height:1px;background:#bdbdbd"></div>
<div class="r" style="left:24px;top:564px;width:1763px;height:1px;background:#dadada"></div>
<div class="r" style="left:0px;top:588px;width:23px;height:1px;background:#bdbdbd"></div>
<div class="r" style="left:24px;top:588px;width:1763px;height:1px;background:#dadada"></div>
<div class="r" style="left:104px;top:229px;width:96px;height:23px;background:#d2d2d2"></div>
<div class="r" style="left:104px;top:251px;width:96px;height:2px;background:#217346"></div>
<div class="r" style="left:0px;top:277px;width:22px;height:23px;background:#d2d2d2"></div>
<div class="r" style="left:22px;top:277px;width:2px;height:23px;background:#217346"></div>
<svg class="r" style="left:4px;top:233px;" width="17" height="17" viewBox="0 0 17 17"><path d="M16 0V16H0z" fill="#b7b7b7"/></svg>
<div class="t" style="left:58.0px;top:233px;font-size:15px;color:#222;transform:scaleX(0.9995);">A</div>
<div class="t" style="left:146.5px;top:233px;font-size:15px;color:#217346;transform:scaleX(0.9995);">B</div>
<div class="t" style="left:234.58px;top:233px;font-size:15px;color:#222;transform:scaleX(1.0007);">C</div>
<div class="t" style="left:314.58px;top:233px;font-size:15px;color:#222;transform:scaleX(1.0007);">D</div>
<div class="t" style="left:395.0px;top:233px;font-size:15px;color:#222;transform:scaleX(0.9995);">E</div>
<div class="t" style="left:475.42px;top:233px;font-size:15px;color:#222;transform:scaleX(0.9997);">F</div>
<div class="t" style="left:554.17px;top:233px;font-size:15px;color:#222;transform:scaleX(0.9994);">G</div>
<div class="t" style="left:634.58px;top:233px;font-size:15px;color:#222;transform:scaleX(1.0007);">H</div>
<div class="t" style="left:717.92px;top:233px;font-size:15px;color:#222;transform:scaleX(0.9983);">I</div>
<div class="t" style="left:796.25px;top:233px;font-size:15px;color:#222;transform:scaleX(1.0000);">J</div>
<div class="t" style="left:875.0px;top:233px;font-size:15px;color:#222;transform:scaleX(0.9995);">K</div>
<div class="t" style="left:955.83px;top:233px;font-size:15px;color:#222;transform:scaleX(0.9997);">L</div>
<div class="t" style="left:1033.75px;top:233px;font-size:15px;color:#222;transform:scaleX(1.0003);">M</div>
<div class="t" style="left:1114.58px;top:233px;font-size:15px;color:#222;transform:scaleX(1.0007);">N</div>
<div class="t" style="left:1194.17px;top:233px;font-size:15px;color:#222;transform:scaleX(0.9994);">O</div>
<div class="t" style="left:1275.0px;top:233px;font-size:15px;color:#222;transform:scaleX(0.9995);">P</div>
<div class="t" style="left:1354.17px;top:233px;font-size:15px;color:#222;transform:scaleX(0.9994);">Q</div>
<div class="t" style="left:1434.58px;top:233px;font-size:15px;color:#222;transform:scaleX(1.0007);">R</div>
<div class="t" style="left:1515.0px;top:233px;font-size:15px;color:#222;transform:scaleX(0.9995);">S</div>
<div class="t" style="left:1595.42px;top:233px;font-size:15px;color:#222;transform:scaleX(0.9997);">T</div>
<div class="t" style="left:1674.58px;top:233px;font-size:15px;color:#222;transform:scaleX(1.0007);">U</div>
<div class="t" style="left:1755.0px;top:233px;font-size:15px;color:#222;transform:scaleX(0.9995);">V</div>
<div class="t" style="left:2.83px;top:258px;font-size:15px;color:#222;transform:scaleX(0.9997);">1</div>
<div class="t" style="left:2.83px;top:282px;font-size:15px;color:#217346;transform:scaleX(0.9997);">2</div>
<div class="t" style="left:2.83px;top:306px;font-size:15px;color:#222;transform:scaleX(0.9997);">3</div>
<div class="t" style="left:2.83px;top:330px;font-size:15px;color:#222;transform:scaleX(0.9997);">4</div>
<div class="t" style="left:2.83px;top:354px;font-size:15px;color:#222;transform:scaleX(0.9997);">5</div>
<div class="t" style="left:2.83px;top:378px;font-size:15px;color:#222;transform:scaleX(0.9997);">6</div>
<div class="t" style="left:2.83px;top:402px;font-size:15px;color:#222;transform:scaleX(0.9997);">7</div>
<div class="t" style="left:2.83px;top:426px;font-size:15px;color:#222;transform:scaleX(0.9997);">8</div>
<div class="t" style="left:2.83px;top:450px;font-size:15px;color:#222;transform:scaleX(0.9997);">9</div>
<div class="t" style="left:-1.34px;top:474px;font-size:15px;color:#222;transform:scaleX(0.9997);">10</div>
<div class="t" style="left:-0.79px;top:498px;font-size:15px;color:#222;transform:scaleX(1.0005);">11</div>
<div class="t" style="left:-1.34px;top:522px;font-size:15px;color:#222;transform:scaleX(0.9997);">12</div>
<div class="t" style="left:-1.34px;top:546px;font-size:15px;color:#222;transform:scaleX(0.9997);">13</div>
<div class="t" style="left:-1.34px;top:570px;font-size:15px;color:#222;transform:scaleX(0.9997);">14</div>
<div class="t" style="left:-1.34px;top:594px;font-size:15px;color:#222;transform:scaleX(0.9997);">15</div>
<div class="r" style="left:24px;top:253px;width:177px;height:23px;background:#e7e6e6"></div>
<div class="r" style="left:24px;top:276px;width:79px;height:1px;background:#000"></div>
<div class="t" style="left:59.0px;top:258px;font-size:15px;color:#000;font-weight:bold;transform:scaleX(0.9995);">X</div>
<div class="t" style="left:108.5px;top:258px;font-size:15px;color:#000;font-weight:bold;transform:scaleX(1.0412);">Proportions</div>
<div class="t" style="left:59.14px;top:282px;font-size:15px;color:#000;transform:scaleX(1.0692);">1</div>
<div class="t" style="left:136.08px;top:282px;font-size:15px;color:#000;transform:scaleX(1.0700);">0.04</div>
<div class="t" style="left:59.14px;top:306px;font-size:15px;color:#000;transform:scaleX(1.0692);">2</div>
<div class="t" style="left:136.08px;top:306px;font-size:15px;color:#000;transform:scaleX(1.0700);">0.12</div>
<div class="t" style="left:59.14px;top:330px;font-size:15px;color:#000;transform:scaleX(1.0692);">3</div>
<div class="t" style="left:136.08px;top:330px;font-size:15px;color:#000;transform:scaleX(1.0700);">0.24</div>
<div class="t" style="left:59.14px;top:354px;font-size:15px;color:#000;transform:scaleX(1.0692);">4</div>
<div class="t" style="left:136.08px;top:354px;font-size:15px;color:#000;transform:scaleX(1.0700);">0.18</div>
<div class="t" style="left:59.14px;top:378px;font-size:15px;color:#000;transform:scaleX(1.0692);">5</div>
<div class="t" style="left:136.08px;top:378px;font-size:15px;color:#000;transform:scaleX(1.0700);">0.12</div>
<div class="t" style="left:59.14px;top:402px;font-size:15px;color:#000;transform:scaleX(1.0692);">6</div>
<div class="t" style="left:140.54px;top:402px;font-size:15px;color:#000;transform:scaleX(1.0704);">0.1</div>
<div class="t" style="left:59.14px;top:426px;font-size:15px;color:#000;transform:scaleX(1.0692);">7</div>
<div class="t" style="left:136.08px;top:426px;font-size:15px;color:#000;transform:scaleX(1.0700);">0.08</div>
<div class="t" style="left:59.14px;top:450px;font-size:15px;color:#000;transform:scaleX(1.0692);">8</div>
<div class="t" style="left:136.08px;top:450px;font-size:15px;color:#000;transform:scaleX(1.0700);">0.06</div>
<div class="t" style="left:59.14px;top:474px;font-size:15px;color:#000;transform:scaleX(1.0692);">9</div>
<div class="t" style="left:136.08px;top:474px;font-size:15px;color:#000;transform:scaleX(1.0700);">0.04</div>
<div class="t" style="left:54.67px;top:498px;font-size:15px;color:#000;transform:scaleX(1.0704);">10</div>
<div class="t" style="left:136.08px;top:498px;font-size:15px;color:#000;transform:scaleX(1.0700);">0.02</div>
<div class="r" style="left:102px;top:275px;width:100px;height:27px;border:2px solid #217346;box-sizing:border-box"></div>
<div class="r" style="left:197px;top:297px;width:8px;height:8px;background:#fff"></div>
<div class="r" style="left:198px;top:298px;width:6px;height:6px;background:#217346"></div>
<div class="r" style="left:381px;top:293px;width:599px;height:259px;border:1px solid #2f3a45;border-radius:7px 7px 6px 6px;box-sizing:border-box;background:linear-gradient(100deg,rgba(255,255,255,.35) 0%,rgba(255,255,255,0) 12%,rgba(255,255,255,0) 20%,rgba(160,190,220,.25) 26%,rgba(255,255,255,.2) 33%,rgba(160,190,220,.2) 45%,rgba(255,255,255,.25) 55%,rgba(160,190,220,.2) 70%,rgba(255,255,255,.2) 85%),linear-gradient(180deg,#d6e6f6 0%,#c8dcf2 40%,#bdd4ee 100%);box-shadow:inset 0 0 0 1px rgba(255,255,255,.55),1px 2px 5px rgba(0,0,0,.55),2px 4px 14px 2px rgba(0,0,0,.45)"></div>
<div class="t" style="left:390.6px;top:303px;font-size:15px;color:#000;transform:scaleX(0.9507);">Data Analysis</div>
<div class="r" style="left:877px;top:293px;width:36px;height:24px;border:1px solid #6b7b8c;border-top:none;border-radius:0 0 0 4px;box-sizing:border-box;background:linear-gradient(180deg,#e8eef5 0%,#d3dde9 45%,#b9c8d9 55%,#c9d6e4 100%)"></div>
<svg class="r" style="left:887px;top:295px;" width="17" height="21" viewBox="0 0 17 21"><text x="8.5" y="17.5" text-anchor="middle" font-family="Liberation Sans" font-weight="bold" font-size="19" fill="#fff" stroke="#3a3a3a" stroke-width="1.6" paint-order="stroke">?</text></svg>
<div class="r" style="left:912px;top:293px;width:60px;height:24px;border:1px solid #5b2a22;border-top:none;border-radius:0 0 4px 0;box-sizing:border-box;background:linear-gradient(180deg,#e7a596 0%,#dc8270 40%,#c8472c 58%,#c85338 75%,#d88a78 100%)"></div>
<svg class="r" style="left:932px;top:296px;" width="20" height="18" viewBox="0 0 20 18"><path d="M4 3.5l12 10M16 3.5L4 13.5" stroke="#3e3e3e" stroke-width="5.2"/><path d="M4 3.5l12 10M16 3.5L4 13.5" stroke="#f6f6f6" stroke-width="3"/></svg>
<div class="r" style="left:389px;top:327px;width:584px;height:218px;background:#f0f0f0;border:1px solid #6a7888;box-sizing:border-box"></div>
<div class="t" style="left:408px;top:336px;font-size:12.5px;color:#000;transform:scaleX(1.0345);">Analysis Tools</div>
<div class="r" style="left:408px;top:346px;width:8px;height:1px;background:#000"></div>
<div class="r" style="left:408px;top:356px;width:432px;height:174px;background:#fff;border:1px solid #828790;box-sizing:border-box"></div>
<div class="r" style="left:410px;top:426px;width:408px;height:17px;background:#3399ff;outline:1px dotted #c07a3a;outline-offset:-1px"></div>
<div class="t" style="left:413.4px;top:362px;font-size:12.5px;color:#000;transform:scaleX(1.0423);">F-Test Two-Sample for Variances</div>
<div class="t" style="left:413.4px;top:379px;font-size:12.5px;color:#000;transform:scaleX(1.0132);">Fourier Analysis</div>
<div class="t" style="left:413.4px;top:396px;font-size:12.5px;color:#000;transform:scaleX(1.0551);">Histogram</div>
<div class="t" style="left:413.4px;top:413px;font-size:12.5px;color:#000;transform:scaleX(1.0647);">Moving Average</div>
<div class="t" style="left:413.4px;top:430px;font-size:12.5px;color:#fff;transform:scaleX(1.0517);">Random Number Generation</div>
<div class="t" style="left:413.4px;top:447px;font-size:12.5px;color:#000;transform:scaleX(1.0065);">Rank and Percentile</div>
<div class="t" style="left:413.4px;top:464px;font-size:12.5px;color:#000;transform:scaleX(1.0169);">Regression</div>
<div class="t" style="left:413.4px;top:481px;font-size:12.5px;color:#000;transform:scaleX(1.0208);">Sampling</div>
<div class="t" style="left:413.4px;top:498px;font-size:12.5px;color:#000;transform:scaleX(1.0522);">t-Test: Paired Two Sample for Means</div>
<div class="t" style="left:413.4px;top:515px;font-size:12.5px;color:#000;transform:scaleX(1.0361);">t-Test: Two-Sample Assuming Equal Variances</div>
<div class="r" style="left:818px;top:357px;width:21px;height:172px;background:linear-gradient(90deg,#e3e3e3 0%,#f0f0f0 20%,#f0f0f0 100%)"></div>
<svg class="r" style="left:822px;top:364px;" width="12" height="8" viewBox="0 0 12 8"><path d="M1 7L6 1l5 6z" fill="#3a3a3a"/></svg>
<svg class="r" style="left:822px;top:513px;" width="12" height="8" viewBox="0 0 12 8"><path d="M1 1L6 7l5-6z" fill="#3a3a3a"/></svg>
<div class="r" style="left:819px;top:427px;width:18px;height:64px;border:1px solid #8a8a8a;border-radius:2px;box-sizing:border-box;background:linear-gradient(90deg,#f3f3f3 0%,#e6e6e6 50%,#d3d3d3 100%)"></div>
<div class="r" style="left:823px;top:455px;width:9px;height:1px;background:#555"></div>
<div class="r" style="left:823px;top:459px;width:9px;height:1px;background:#555"></div>
<div class="r" style="left:823px;top:463px;width:9px;height:1px;background:#555"></div>
<div class="r" style="left:857px;top:338px;width:97px;height:28px;border:1px solid #3c9ad8;border-radius:3px;box-sizing:border-box;background:linear-gradient(180deg,#f2f2f2 0%,#ebebeb 50%,#dddddd 51%,#cfcfcf 100%);box-shadow:inset 0 0 0 1px #aee0fb"></div>
<div class="t" style="left:896.7px;top:347px;font-size:12.5px;color:#000;transform:scaleX(0.9413);">OK</div>
<div class="r" style="left:857px;top:372px;width:97px;height:28px;border:1px solid #707070;border-radius:3px;box-sizing:border-box;background:linear-gradient(180deg,#f2f2f2 0%,#ebebeb 50%,#dddddd 51%,#cfcfcf 100%)"></div>
<div class="t" style="left:886px;top:381px;font-size:12.5px;color:#000;transform:scaleX(0.9509);">Cancel</div>
<div class="r" style="left:857px;top:414px;width:97px;height:28px;border:1px solid #707070;border-radius:3px;box-sizing:border-box;background:linear-gradient(180deg,#f2f2f2 0%,#ebebeb 50%,#dddddd 51%,#cfcfcf 100%)"></div>
<div class="t" style="left:892.4px;top:423px;font-size:12.5px;color:#000;transform:scaleX(1.0113);">Help</div>
<div class="r" style="left:892px;top:434px;width:8px;height:1px;background:#000"></div>
<svg class="r" style="left:0px;top:0px;pointer-events:none" width="1787" height="599" viewBox="0 0 1787 599"><path d="M428.5 68L467 133H447.5V198H408.7V133H389Z" fill="none" stroke="#ed1c24" stroke-width="5" stroke-linejoin="round"/></svg>
<svg class="r" style="left:0px;top:0px;pointer-events:none" width="1787" height="599" viewBox="0 0 1787 599"><path d="M1717.5 95.5L1759.5 162H1738.5V230H1696.7V162H1675.5Z" fill="none" stroke="#ed1c24" stroke-width="5" stroke-linejoin="round"/></svg>
</body></html>
